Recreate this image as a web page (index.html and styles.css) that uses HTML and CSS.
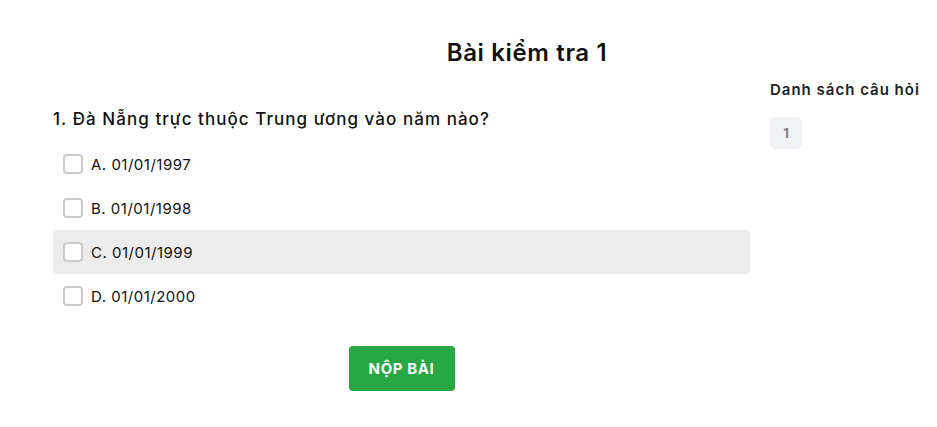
FILE: index.html
```html
<!DOCTYPE html>
<html lang="vi">
<head>
<meta charset="utf-8">
<title>Bài kiểm tra 1</title>
<link rel="stylesheet" href="styles.css">
</head>
<body>
<h1 class="title">Bài kiểm tra 1</h1>
<div class="layout">
  <main class="quiz">
    <div class="question">1. Đà Nẵng trực thuộc Trung ương vào năm nào?</div>
    <ul class="options">
      <li class="option"><span class="box"></span><span>A. 01/01/1997</span></li>
      <li class="option"><span class="box"></span><span>B. 01/01/1998</span></li>
      <li class="option option-hover"><span class="box"></span><span>C. 01/01/1999</span></li>
      <li class="option"><span class="box"></span><span>D. 01/01/2000</span></li>
    </ul>
    <div class="actions"><button class="submit">NỘP BÀI</button></div>
  </main>
  <aside class="sidebar">
    <div class="side-title">Danh sách câu hỏi</div>
    <div class="nums"><span class="num">1</span></div>
  </aside>
</div>
</body>
</html>
```
FILE: styles.css
```css
* { box-sizing: border-box; }
body {
  margin: 0;
  font-family: Inter, "Open Sans", sans-serif;
  color: #111;
  background: #fff;
}
.title {
  margin: 0;
  padding: 38px 0 0 117px;
  text-align: center;
  font-size: 24px;
  font-weight: 600;
  line-height: 30px;
  letter-spacing: 0.65px;
}
.layout {
  display: flex;
  padding: 0 0 0 53px;
  gap: 20px;
}
.quiz {
  width: 697px;
  padding-top: 40px;
}
.question {
  font-size: 17px;
  font-weight: 500;
  line-height: 22px;
  letter-spacing: 1.05px;
  margin-bottom: 12px;
}
.options {
  list-style: none;
  margin: 0;
  padding: 0;
}
.option {
  display: flex;
  align-items: center;
  gap: 8px;
  height: 44px;
  padding-left: 10px;
  font-size: 15px;
  letter-spacing: 0.5px;
  border-radius: 4px;
}
.option-hover { background: #ececec; }
.box {
  width: 20px;
  height: 20px;
  border: 2px solid #cbcbcb;
  border-radius: 4px;
  background: #fff;
}
.actions {
  display: flex;
  justify-content: center;
  padding-top: 28px;
}
.submit {
  width: 106px;
  height: 45px;
  border: none;
  border-radius: 4px;
  background: #28a745;
  color: #fff;
  font-family: inherit;
  font-size: 15px;
  font-weight: 700;
  letter-spacing: 0.6px;
}
.sidebar {
  padding-top: 12px;
}
.side-title {
  font-size: 15px;
  font-weight: 600;
  line-height: 20px;
  letter-spacing: 1px;
  color: #222;
}
.nums {
  margin-top: 17px;
  display: flex;
}
.num {
  width: 32px;
  height: 32px;
  border-radius: 6px;
  background: #f0f1f5;
  color: #808080;
  font-size: 13px;
  font-weight: 700;
  display: flex;
  align-items: center;
  justify-content: center;
}
```
